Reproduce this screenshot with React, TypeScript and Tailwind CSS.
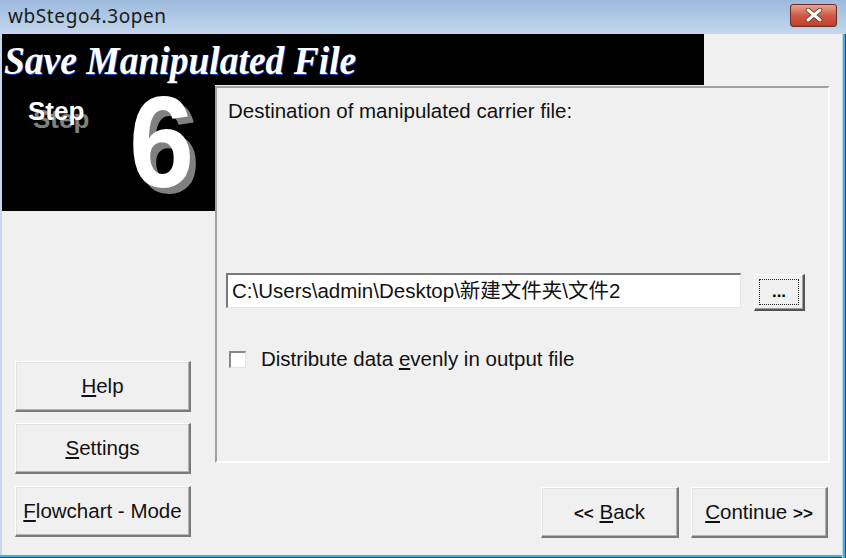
import React from "react";

const ui = { fontFamily: '"Liberation Sans", Arial, "Noto Sans CJK SC", sans-serif' };

function Btn({ children, className = "" }: { children: React.ReactNode; className?: string }) {
  return (
    <div
      className={
        "flex items-center justify-center bg-[#f0f0f0] border-t border-l border-t-white border-l-white border-r-2 border-b-2 border-r-[#7a7a7a] border-b-[#7a7a7a] text-[20.5px] text-[#111] " +
        className
      }
      style={{ ...ui, boxShadow: "inset -1px -1px 0 #b4b4b4, inset 1px 1px 0 #e3e3e3" }}
    >
      {children}
    </div>
  );
}

export default function App() {
  return (
    <div className="w-[846px] h-[558px] overflow-hidden relative bg-[#f0f0f0]">
      {/* title bar */}
      <div className="h-[34px] flex items-center justify-between pl-[8px] pr-[9px] bg-gradient-to-b from-[#9db9dc] to-[#c3d8ee]">
        <span className="text-[19px] text-[#1a1a1a] tracking-[0.6px] mt-[-2px]" style={{ fontFamily: '"Noto Sans", "Open Sans", sans-serif' }}>
          wbStego4.3open
        </span>
        <div className="w-[47px] h-[23px] mt-[-4px] rounded-[3px] border border-[#6b2a22] bg-gradient-to-b from-[#e6a493] via-[#cf5a45] to-[#c0402c] flex items-center justify-center">
          <svg width="18" height="14" viewBox="0 0 18 14">
            <path d="M3 2 L15 12 M15 2 L3 12" stroke="#5a2a22" strokeWidth="4.5" strokeLinecap="round" />
            <path d="M3 2 L15 12 M15 2 L3 12" stroke="#ffffff" strokeWidth="3" strokeLinecap="round" />
          </svg>
        </div>
      </div>

      {/* body */}
      <div className="h-[521px] flex flex-col border-l-2 border-l-[#c4d8ee] pr-[6px]">
        <div className="h-[51px] w-[702px] bg-black flex items-center pl-[2px] overflow-hidden">
          <span
            className="text-white font-bold italic text-[41px] leading-none mt-[1px] origin-left scale-x-[0.915] whitespace-nowrap"
            style={{ fontFamily: '"Liberation Serif", "Times New Roman", serif', textShadow: "1px 1px 0 #2040c0" }}
          >
            Save Manipulated File
          </span>
        </div>
        <div className="flex flex-1">
          {/* left column */}
          <div className="w-[213px] flex flex-col">
            <div className="h-[126px] bg-black relative overflow-hidden">
              <span
                className="absolute left-[31px] top-[21px] text-[#808080] font-bold text-[26px] leading-none"
                style={ui}
              >
                Step
              </span>
              <span className="absolute left-[26px] top-[13px] text-white font-bold text-[26px] leading-none" style={ui}>
                Step
              </span>
              <span
                className="absolute left-[133px] top-[-2px] text-[#808080] font-bold text-[130px] leading-none origin-left scale-x-[0.9]"
                style={ui}
              >
                6
              </span>
              <span
                className="absolute left-[127px] top-[-8px] text-white font-bold text-[130px] leading-none origin-left scale-x-[0.9]"
                style={ui}
              >
                6
              </span>
            </div>
            <div className="flex flex-col gap-[11px] pl-[13px] mt-[150px]">
              <Btn className="w-[176px] h-[51px]">
                <span><u>H</u>elp</span>
              </Btn>
              <Btn className="w-[176px] h-[51px]">
                <span><u>S</u>ettings</span>
              </Btn>
              <Btn className="w-[176px] h-[51px] mt-[1px]">
                <span><u>F</u>lowchart - Mode</span>
              </Btn>
            </div>
          </div>

          {/* right column */}
          <div className="flex flex-col">
            <div
              className="w-[615px] h-[377px] mt-[1px] border-t-2 border-l-2 border-t-[#a0a0a0] border-l-[#a0a0a0] border-r-2 border-b-2 border-r-white border-b-white flex flex-col pl-[11px]"
              style={ui}
            >
              <div className="text-[20.5px] text-[#111] mt-[11px] leading-[23px]">Destination of manipulated carrier file:</div>
              <div className="flex items-start mt-[151px]">
                <div
                  className="w-[515px] h-[35px] bg-white border-t-2 border-l-2 border-t-[#7a7a7a] border-l-[#7a7a7a] border-b border-r border-b-[#e3e3e3] border-r-[#e3e3e3] flex items-center pl-[4px] text-[20.5px] text-[#111] ml-[-2px]"
                  style={ui}
                >
                  C:\Users\admin\Desktop\新建文件夹\文件2
                </div>
                <div
                  className="ml-[13px] mt-[1px] w-[51px] h-[37px] bg-[#f0f0f0] border-t border-l border-t-white border-l-white border-r-2 border-b-2 border-r-[#555] border-b-[#555] p-[4px]"
                  style={{ boxShadow: "inset -1px -1px 0 #a0a0a0" }}
                >
                  <div className="w-full h-full border border-dotted border-[#222] flex items-center justify-center text-[17px] font-bold leading-none pb-[2px]">
                    ...
                  </div>
                </div>
              </div>
              <div className="flex items-center mt-[33px]">
                <div className="w-[17px] h-[17px] bg-white border-t-2 border-l-2 border-t-[#8a8a8a] border-l-[#8a8a8a] border-b border-r border-b-[#e3e3e3] border-r-[#e3e3e3] ml-[1px]" />
                <span className="ml-[15px] text-[20.5px] text-[#111]">
                  Distribute data <u>e</u>venly in output file
                </span>
              </div>
            </div>
            <div className="flex gap-[12px] pl-[326px] mt-[24px]">
              <Btn className="w-[138px] h-[51px]">
                <span>
                  <span className="text-[17px] font-bold">&lt;&lt;</span> <u>B</u>ack
                </span>
              </Btn>
              <Btn className="w-[137px] h-[51px]">
                <span>
                  <u>C</u>ontinue <span className="text-[17px] font-bold">&gt;&gt;</span>
                </span>
              </Btn>
            </div>
          </div>
        </div>
      </div>
      <div className="h-[2px] bg-[#3db4e0]" />
      <div className="h-[1px] bg-[#2a4660]" />
      {/* right frame lines */}
      <div className="absolute right-0 top-[34px] bottom-0 w-[4px] flex">
        <div className="w-[1px] bg-[#b8d0ea]" />
        <div className="w-[2px] bg-[#3db4e0]" />
        <div className="w-[1px] bg-[#2a4660]" />
      </div>
    </div>
  );
}
